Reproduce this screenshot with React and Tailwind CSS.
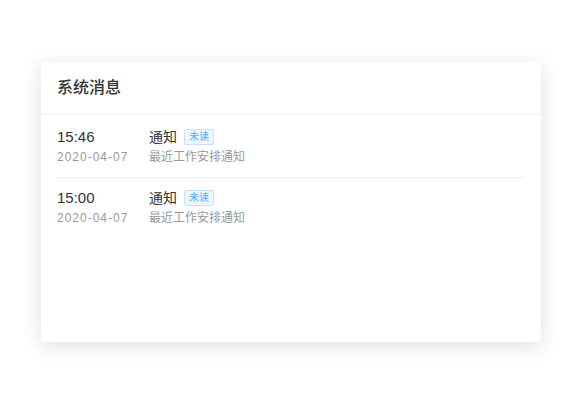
import React from 'react';

const messages = [
  { time: '15:46', date: '2020-04-07', title: '通知', desc: '最近工作安排通知' },
  { time: '15:00', date: '2020-04-07', title: '通知', desc: '最近工作安排通知' },
];

const MessageRow = ({ msg, last }) => (
  <div className={last ? 'flex py-[10px]' : 'flex py-[10px] border-b border-[#ebeef5]'}>
    <div className="w-[92px] shrink-0">
      <div className="text-[15px] leading-[20px] text-[#333333]">{msg.time}</div>
      <div className="text-[12px] leading-[20px] tracking-[1px] text-[#999999]">{msg.date}</div>
    </div>
    <div>
      <div className="flex items-center h-[20px]">
        <span className="text-[14px] leading-[20px] text-[#333333]">{msg.title}</span>
        <span className="ml-[7px] h-[16px] px-[4px] flex items-center text-[10px] leading-none text-[#5aa9ff] bg-[#eef6ff] border border-[#c6e0ff] rounded-[2px]">
          未读
        </span>
      </div>
      <div className="text-[12px] leading-[20px] text-[#999999]">{msg.desc}</div>
    </div>
  </div>
);

export default function App() {
  return (
    <div
      className="min-h-screen bg-white flex items-center justify-center"
      style={{ fontFamily: '"Liberation Sans", "Noto Sans CJK SC", sans-serif' }}
    >
      <div className="w-[500px] h-[280px] bg-white rounded-[4px] shadow-[0_4px_20px_0_rgba(0,0,0,0.13)] overflow-hidden">
        <div className="h-[53px] px-4 flex items-center border-b border-[#ebeef5]">
          <h2 className="text-[16px] font-medium text-[#333333]">系统消息</h2>
        </div>
        <div className="px-4 pt-[2px]">
          {messages.map((m, i) => (
            <MessageRow key={i} msg={m} last={i === messages.length - 1} />
          ))}
        </div>
      </div>
    </div>
  );
}
